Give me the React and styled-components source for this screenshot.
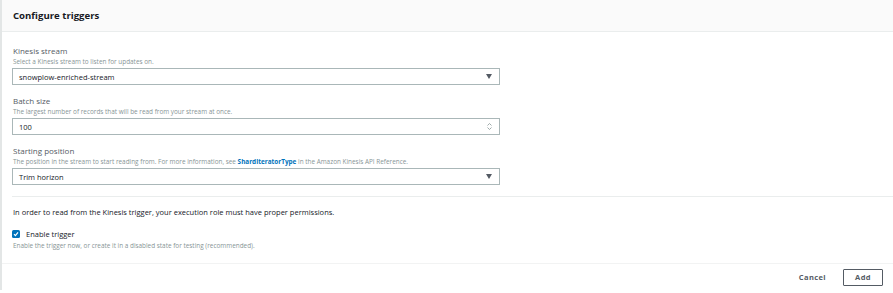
import styled, { createGlobalStyle } from "styled-components";

const GlobalStyle = createGlobalStyle`
  body {
    margin: 0;
    background: #fff;
    font-family: "Open Sans", "Liberation Sans", sans-serif;
    color: #16191f;
  }
`;

const Panel = styled.div`
  width: 893px;
  height: 290px;
  box-sizing: border-box;
  background: #fff;
  border-left: 2px solid #e3e6e6;
  box-shadow: 0 3px 0 0 #d5dbdb;
  display: flex;
  flex-direction: column;
`;

const Header = styled.div`
  height: 31px;
  background: #fafafa;
  border-bottom: 1px solid #eaeded;
  display: flex;
  align-items: center;
  padding-left: 11px;
  h2 {
    margin: 0;
    font-size: 9.6px;
    font-weight: 700;
    color: #16191f;
  }
`;

const Body = styled.div`
  padding: 14px 393px 13px 10px;
  border-bottom: 1px solid #f2f3f3;
`;

const Field = styled.div`
  margin-bottom: 11px;
`;

const Label = styled.div`
  font-size: 8px;
  line-height: 10px;
  color: #545b64;
  padding-left: 1px;
`;

const Desc = styled.div`
  font-size: 6.4px;
  line-height: 9px;
  color: #879596;
  padding-left: 1px;
  margin-bottom: ${(p) => (p.$tight ? "0" : "2px")};
  margin-top: ${(p) => (p.$tight ? "2px" : "1px")};
  a {
    color: #0073bb;
    font-weight: 700;
    text-decoration: none;
  }
`;

const Box = styled.div`
  height: 17px;
  box-sizing: border-box;
  border: 1px solid #aab7b8;
  display: flex;
  align-items: center;
  justify-content: space-between;
  padding: 0 6px;
  font-size: 7.5px;
  color: #16191f;
`;

const Arrow = styled.span`
  width: 0;
  height: 0;
  border-left: 3.5px solid transparent;
  border-right: 3.5px solid transparent;
  border-top: 5px solid #545b64;
  margin-right: 1px;
`;

const Spinner = styled.span`
  display: flex;
  flex-direction: column;
  align-items: center;
  gap: 1px;
  margin-right: 1px;
`;

const Divider = styled.div`
  height: 1px;
  background: #eaeded;
  margin: 0 -393px 0 0;
`;

const Note = styled.p`
  margin: 10px 0 12px 1px;
  font-size: 7.5px;
  line-height: 10px;
  color: #16191f;
`;

const CheckRow = styled.label`
  display: flex;
  align-items: center;
  gap: 6px;
  height: 10px;
  font-size: 7.5px;
  color: #16191f;
`;

const Check = styled.span`
  width: 8px;
  height: 8px;
  border-radius: 1.5px;
  background: #0073bb;
  display: flex;
  align-items: center;
  justify-content: center;
`;

const Footer = styled.div`
  flex: 1;
  display: flex;
  align-items: center;
  justify-content: flex-end;
  gap: 17px;
  padding-right: 10px;
`;

const Button = styled.button`
  font-family: inherit;
  font-size: 7.5px;
  font-weight: 700;
  letter-spacing: 0.4px;
  color: #545b64;
  background: #fff;
  height: 17px;
  padding: 0;
  width: ${(p) => (p.$bordered ? "40px" : "auto")};
  border: ${(p) => (p.$bordered ? "1px solid #545b64" : "none")};
  border-radius: 1px;
`;

const Chevron = ({ up }) => (
  <svg width="5" height="3" viewBox="0 0 5 3">
    <path
      d={up ? "M0.5 2.5 L2.5 0.5 L4.5 2.5" : "M0.5 0.5 L2.5 2.5 L4.5 0.5"}
      fill="none"
      stroke="#879596"
      strokeWidth="0.8"
    />
  </svg>
);

export default function App() {
  return (
    <>
      <GlobalStyle />
      <Panel>
        <Header>
          <h2>Configure triggers</h2>
        </Header>
        <Body>
          <Field>
            <Label>Kinesis stream</Label>
            <Desc>Select a Kinesis stream to listen for updates on.</Desc>
            <Box>
              <span>snowplow-enriched-stream</span>
              <Arrow />
            </Box>
          </Field>
          <Field>
            <Label>Batch size</Label>
            <Desc>The largest number of records that will be read from your stream at once.</Desc>
            <Box>
              <span>100</span>
              <Spinner>
                <Chevron up />
                <Chevron />
              </Spinner>
            </Box>
          </Field>
          <Field>
            <Label>Starting position</Label>
            <Desc>
              The position in the stream to start reading from. For more information, see{" "}
              <a href="#">ShardIteratorType</a> in the Amazon Kinesis API Reference.
            </Desc>
            <Box>
              <span>Trim horizon</span>
              <Arrow />
            </Box>
          </Field>
          <Divider />
          <Note>
            In order to read from the Kinesis trigger, your execution role must have proper
            permissions.
          </Note>
          <CheckRow>
            <Check>
              <svg width="6" height="6" viewBox="0 0 6 6">
                <path d="M1 3.2 L2.4 4.6 L5 1.4" fill="none" stroke="#fff" strokeWidth="1.2" />
              </svg>
            </Check>
            Enable trigger
          </CheckRow>
          <Desc $tight>
            Enable the trigger now, or create it in a disabled state for testing (recommended).
          </Desc>
        </Body>
        <Footer>
          <Button>Cancel</Button>
          <Button $bordered>Add</Button>
        </Footer>
      </Panel>
    </>
  );
}
